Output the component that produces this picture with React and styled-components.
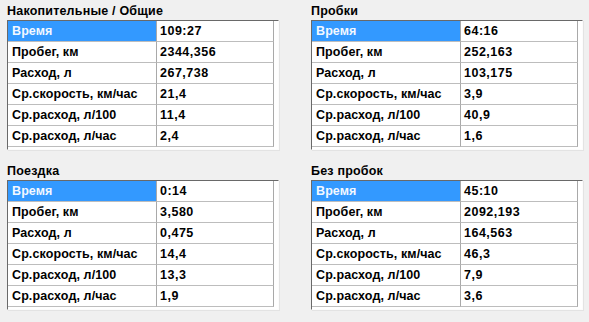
import React from "react";
import styled, { createGlobalStyle } from "styled-components";

const GlobalStyle = createGlobalStyle`
  html, body {
    margin: 0;
    padding: 0;
    background: #f0f0f0;
  }
  body {
    font-family: "Liberation Sans", Arial, sans-serif;
    font-size: 12px;
    color: #000;
  }
`;

const Wrapper = styled.div`
  width: 589px;
  height: 322px;
  box-sizing: border-box;
  padding: 0 0 0 7px;
  display: grid;
  grid-template-columns: 272px 272px;
  grid-template-rows: 150px 150px;
  column-gap: 32px;
  row-gap: 10px;
`;

const Panel = styled.div`
  display: flex;
  flex-direction: column;
`;

const Title = styled.div`
  height: 20px;
  box-sizing: border-box;
  padding-top: 4px;
  line-height: 14px;
  font-weight: 700;
  font-size: 12.5px;
  letter-spacing: 0.2px;
`;

const Grid = styled.div`
  width: 272px;
  height: 130px;
  box-sizing: border-box;
  background: #fff;
  border-top: 1px solid #696969;
  border-left: 1px solid #696969;
  border-right: 1px solid #fcfcfc;
  border-bottom: 1px solid #fcfcfc;
  box-shadow: 1px 1px 0 #e3e3e3;
  padding: 0 4px 2px 0;
`;

const Row = styled.div`
  display: grid;
  grid-template-columns: 149px 117px;
  height: 21px;
`;

const Cell = styled.div`
  box-sizing: border-box;
  height: 21px;
  padding-left: ${p => (p.value ? "3px" : "4px")};
  line-height: 20px;
  font-weight: 700;
  font-size: 12.5px;
  letter-spacing: ${p => (p.value ? "0.5px" : "0.1px")};
  white-space: nowrap;
  border-bottom: 1px solid #bdbdbd;
  border-right: 1px solid #a9a9a9;
  background: ${p => (p.selected ? "#3399ff" : "#fff")};
  color: ${p => (p.selected ? "#f2f8ff" : "#000")};
`;

const labels = [
  "Время",
  "Пробег, км",
  "Расход, л",
  "Ср.скорость, км/час",
  "Ср.расход, л/100",
  "Ср.расход, л/час",
];

const panels = [
  { title: "Накопительные / Общие", values: ["109:27", "2344,356", "267,738", "21,4", "11,4", "2,4"] },
  { title: "Пробки", values: ["64:16", "252,163", "103,175", "3,9", "40,9", "1,6"] },
  { title: "Поездка", values: ["0:14", "3,580", "0,475", "14,4", "13,3", "1,9"] },
  { title: "Без пробок", values: ["45:10", "2092,193", "164,563", "46,3", "7,9", "3,6"] },
];

const StatPanel = ({ title, values }) => (
  <Panel>
    <Title>{title}</Title>
    <Grid>
      {labels.map((label, i) => (
        <Row key={label}>
          <Cell selected={i === 0}>{label}</Cell>
          <Cell value>{values[i]}</Cell>
        </Row>
      ))}
    </Grid>
  </Panel>
);

const App = () => (
  <>
    <GlobalStyle />
    <Wrapper>
      {panels.map(p => (
        <StatPanel key={p.title} title={p.title} values={p.values} />
      ))}
    </Wrapper>
  </>
);

export default App;
